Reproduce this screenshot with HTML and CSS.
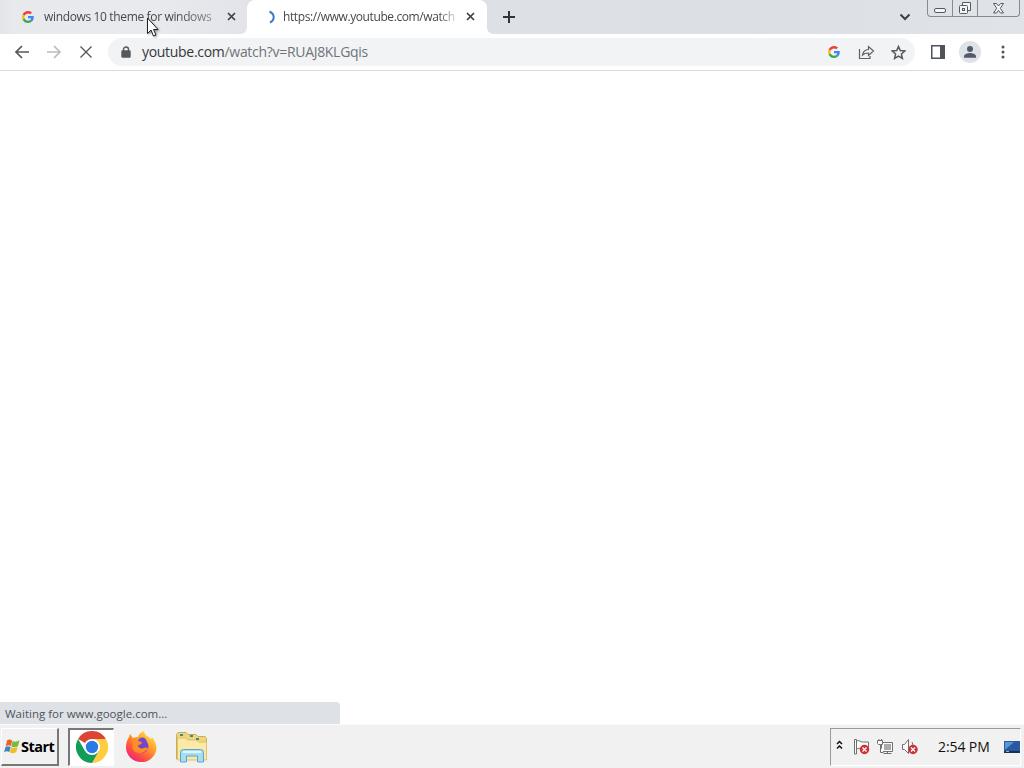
FILE: index.html
```
<!DOCTYPE html>
<html lang="en">

<head>
    <meta charset="utf-8">
    <meta name="viewport" content="width=device-width, initial-scale=1.0">
    <title>youtube.com</title>
    <link rel="stylesheet" href="styles.css">
</head>

<body>
    <!-- Shared logo -->
    <svg class="defs" width="0" height="0">
        <symbol id="google" viewBox="0 0 48 48">
            <path fill="#ea4335" d="M24 9.500c3.500 0 6.700 1.200 9.200 3.600l6.900-6.900C35.900 2.400 30.500 0 24 0 14.600 0 6.500 5.400 2.600 13.200l8 6.200C12.400 13.700 17.700 9.500 24 9.500z" />
            <path fill="#4285f4" d="M47 24.500c0-1.600-.2-3.100-.4-4.500H24v9h12.900c-.6 3-2.300 5.500-4.800 7.200l7.700 6C44.400 38 47 31.800 47 24.500z" />
            <path fill="#fbbc05" d="M10.500 28.600c-.5-1.500-.8-3-.8-4.600s.3-3.100.8-4.600l-8-6.200C.9 16.500 0 20.100 0 24s.9 7.500 2.600 10.800l7.900-6.200z" />
            <path fill="#34a853" d="M24 48c6.500 0 11.900-2.100 15.900-5.800l-7.700-6c-2.200 1.500-4.900 2.300-8.200 2.300-6.300 0-11.600-4.200-13.500-9.900l-8 6.200C6.500 42.600 14.600 48 24 48z" />
        </symbol>
    </svg>

    <div class="browser">
        <!-- Tabs -->
        <header class="tab-strip">
            <div class="tab">
                <svg class="favicon" width="12" height="12"><use href="#google" /></svg>
                <span class="tab-title first-title">windows 10 theme for windows</span>
                <svg class="close" width="9" height="9" viewBox="0 0 9 9"><path d="M1 1l7 7M8 1L1 8" /></svg>
            </div>
            <div class="tab active">
                <svg class="spinner" width="8" height="14" viewBox="0 0 8 14"><path d="M1.500 1.500C7 4 7 10 2 12.500" /></svg>
                <span class="tab-title">https://www.youtube.com/watch</span>
                <svg class="close" width="9" height="9" viewBox="0 0 9 9"><path d="M1 1l7 7M8 1L1 8" /></svg>
            </div>
            <svg class="new-tab" width="12" height="12" viewBox="0 0 12 12"><path d="M6 0v12M0 6h12" /></svg>
            <svg class="tab-search" width="12" height="8" viewBox="0 0 12 8"><path d="M1.500 1.500L6 6l4.500-4.500" /></svg>
            <div class="window-controls">
                <span class="control"><svg width="13" height="6" viewBox="0 0 13 6"><rect x=".5" y=".5" width="11" height="4" rx="1.500" /></svg></span>
                <span class="control restore"><svg width="14" height="14" viewBox="0 0 14 14"><path d="M4.500 4V1.500h8v8H10" /><rect x="1.500" y="4.500" width="8" height="8" rx="1" /><rect x="4.500" y="7.500" width="2" height="2" /></svg></span>
                <span class="control exit"><svg width="13" height="11" viewBox="0 0 13 11"><path d="M1.500.5h3l2 2.500 2-2.500h3L8.300 5.300l3.200 4.700h-3l-2-2.600-2 2.600h-3l3.200-4.700z" /></svg></span>
            </div>
        </header>

        <!-- Toolbar -->
        <nav class="toolbar">
            <svg class="back" width="16" height="14" viewBox="0 0 16 14"><path d="M15 7H2M8 1L2 7l6 6" /></svg>
            <svg class="forward" width="16" height="14" viewBox="0 0 16 14"><path d="M1 7h13M8 1l6 6-6 6" /></svg>
            <svg class="stop" width="12" height="12" viewBox="0 0 12 12"><path d="M.5.500l11 11M11.500.5l-11 11" /></svg>
            <div class="address">
                <svg class="lock" width="10" height="12" viewBox="0 0 10 12"><path d="M2.500 5V3.500a2.500 2.500 0 0 1 5 0V5" /><rect x="1" y="5" width="8" height="6" rx=".5" /></svg>
                <span class="url"><b>youtube.com</b>/watch?v=RUAJ8KLGqis</span>
                <svg width="12" height="12"><use href="#google" /></svg>
                <svg class="share" width="17" height="15" viewBox="0 0 17 15"><path d="M1.500 4v9.500H12V11M4.500 10C5 6.500 7 4.800 10.500 4.500V1.500L15.500 6l-5 4.500V8C7.500 8 6 8.500 4.500 10z" /></svg>
                <svg class="star" width="15" height="15" viewBox="0 0 15 15"><path d="M7.500 1.500l1.800 4.100 4.500.4-3.400 3 1 4.400-3.900-2.300-3.900 2.300 1-4.400-3.400-3 4.500-.4z" /></svg>
            </div>
            <svg class="side-panel" width="14" height="14" viewBox="0 0 14 14"><path d="M0 0h14v14H0zM1.500 1.500v11H9v-11z" fill-rule="evenodd" /></svg>
            <svg class="profile" width="22" height="22" viewBox="0 0 22 22"><circle cx="11" cy="11" r="11" fill="#dfe2e7" /><circle cx="11" cy="8" r="3" /><path d="M5 16.700v-1.500C5 13 9 12 11 12s6 1 6 3.200v1.500z" /></svg>
            <svg class="menu" width="4" height="14" viewBox="0 0 4 14"><circle cx="2" cy="2" r="1.500" /><circle cx="2" cy="7" r="1.500" /><circle cx="2" cy="12" r="1.500" /></svg>
        </nav>

        <main class="page">
            <div class="status">Waiting for www.google.com...</div>
        </main>
    </div>

    <!-- Taskbar -->
    <footer class="taskbar">
        <div class="start">
            <svg width="16" height="15" viewBox="0 0 16 15">
                <path fill="#e8632b" d="M3 1.500c2-1.500 3.500-1 5.200 0L7 7c-1.500-1-3.300-1-5.300.2z" />
                <path fill="#7eb83c" d="M8.700 2c2 1 3.800 1 6.800-.7L14 7c-2 1.500-4.800 1.600-6.600.5z" />
                <path fill="#3f83c5" d="M1.500 8c1.700-1.200 3.500-1 5.200 0l-1.400 5C3.600 12 2 12 0 13.200z" />
                <path fill="#f0bd2c" d="M7.200 8.300c2 1 4.300 1 6.500-.3l-1.500 5c-2 1.500-4.500 1.500-6.400.3z" />
            </svg>
            <span>Start</span>
        </div>
        <div class="task pressed">
            <svg width="32" height="32" viewBox="0 0 32 32">
                <path fill="#db4437" d="M16 16L2.140 8A16 16 0 0 1 29.860 8z" />
                <path fill="#ffcd40" d="M16 16V8h13.860A16 16 0 0 1 16 32l6.930-12z" />
                <path fill="#0f9d58" d="M2.140 8A16 16 0 0 0 16 32l6.930-12L16 16 9.070 20z" />
                <circle cx="16" cy="16" r="8" fill="#fff" />
                <circle cx="16" cy="16" r="6.200" fill="#287be6" />
            </svg>
        </div>
        <div class="task firefox">
            <svg width="32" height="32" viewBox="0 0 32 32">
                <defs>
                    <linearGradient id="flame" x1=".85" y1=".1" x2=".2" y2=".95">
                        <stop offset="0" stop-color="#ffe14a" />
                        <stop offset=".4" stop-color="#ff9629" />
                        <stop offset=".75" stop-color="#ff4b45" />
                        <stop offset="1" stop-color="#e9257f" />
                    </linearGradient>
                </defs>
                <path fill="url(#flame)" d="M4 6l1-3 3 4c2-1 4-1 5-1C14 3 16 1 19 0c0 4 4 5 7 8l1-2c3 4 4.500 7 4.500 11A15 15 0 0 1 16 31 15 15 0 0 1 1 17C1 12 2 9 4 6z" />
                <path fill="#7545c9" d="M14 8c4-3 7-1 8 3 2 3 2 6 0 8-2 4-8 4-11 1-2-2-2-4-1-6l5-1-2-3z" />
                <path fill="#ff8d25" d="M5 7c3 0 6 1 8 3l4 1c0 2-2 3-4 3 0 3 3 4 6 3 2-1 4 0 4 1-3 2-4 4-8 4-6 0-9-5-7-9z" />
            </svg>
        </div>
        <div class="task explorer">
            <svg width="34" height="32" viewBox="0 0 34 32">
                <path fill="#f0d67b" stroke="#c9ad5b" d="M1.500 27V3.500L3 1.500h8l2 2h8l2 2h7l1.500 2V28h-30z" />
                <path fill="#fbe9a5" stroke="#dcc273" d="M2.500 29V7h8l2 2h9l2 2h8v18z" />
                <path stroke="#4a8190" stroke-width="2" d="M5 4h3M15 5h3M21 8h3" />
                <path fill="#a8dcf0" stroke="#57a7ce" d="M5.500 31v-9.500q0-3 3-3h17q3 0 3 3V31h-6v-6h-11v6z" />
                <path fill="#dff5fd" d="M8 20h18v2H8z" />
            </svg>
        </div>
        <div class="tray">
            <svg class="chevrons" width="7" height="10" viewBox="0 0 7 10"><path d="M1 4l2.500-2.500L6 4M1 8.500L3.500 6 6 8.500" /></svg>
            <svg class="flag" width="17" height="16" viewBox="0 0 17 16">
                <path class="line" d="M1.500 15V.5h2V15zM3.500 2c3-1.500 4 1.500 7 1h5v7c-4 1-7-2-12 0" />
                <circle cx="11.500" cy="10.500" r="4.700" fill="#cf3038" /><path class="cross" d="M9.500 8.500l4 4M13.500 8.500l-4 4" />
            </svg>
            <svg class="network" width="17" height="16" viewBox="0 0 17 16">
                <path class="line" d="M4.500 3.500h11v9h-11zM6.500 14.500h8M10.500 13v2" />
                <path fill="#aaa" d="M7 5h7v6H7z" />
                <path class="line" d="M.5 1.500h5v4h-2v8h3M3.500 5.500h-2l-1-1v-3M2 0v2M4.500 0v2" />
            </svg>
            <svg class="sound" width="17" height="16" viewBox="0 0 17 16">
                <path class="line" d="M1.500 5.500h2l4-5v14l-4-4h-2zM11 3l1 3" />
                <circle cx="12" cy="10.500" r="4.700" fill="#cf3038" /><path class="cross" d="M10 8.500l4 4M14 8.500l-4 4" />
            </svg>
            <time class="clock">2:54 PM</time>
            <svg class="desktop" width="16" height="14" viewBox="0 0 16 14">
                <path fill="#2859a2" d="M0 1h16v11H0z" /><path fill="#5b94d3" d="M1 2h9L2 9H1z" /><path fill="#183052" d="M0 11h16v2H0z" /><path fill="#85b4db" d="M2 11h3v1H2z" />
            </svg>
        </div>
    </footer>

    <!-- Mouse pointer -->
    <svg class="cursor" width="14" height="21" viewBox="0 0 14 21"><path d="M1.500 1v15.500L5 13l2.500 6 2.500-1-2.500-5.500H12z" /></svg>
</body>

</html>
```
FILE: styles.css
```
* {
    box-sizing: border-box;
}

body {
    margin: 0;
    width: 1024px;
    height: 768px;
    overflow: hidden;
    display: flex;
    flex-direction: column;
    background: #fff;
    color: #45484d;
    font-family: "Open Sans", "Noto Sans", sans-serif;
    font-size: 12px;
}

svg {
    display: block;
    flex: none;
    fill: none;
}

.defs {
    position: absolute;
}

.browser {
    height: 724px;
    display: flex;
    flex-direction: column;
}

/* Tabs */
.tab-strip {
    height: 34px;
    display: flex;
    align-items: flex-start;
    background: linear-gradient(90deg, #e2e4e8, #dee1e6 25%, #dcdfe4 75%, #e0e3e7);
}

.tab {
    width: 247px;
    height: 34px;
    padding: 0 11px 1px 22px;
    display: flex;
    align-items: center;
    background: linear-gradient(90deg, #e2e4e8 0, #e8e9ed 12px, #e9eaee 60%, #e2e4e9);
}

.tab.active {
    position: relative;
    width: 240px;
    padding: 0 12px 1px 21px;
    background: #fff;
    border-radius: 8px 8px 0 0;
}

/* Curved feet of the active tab */
.tab.active::before,
.tab.active::after {
    content: "";
    position: absolute;
    bottom: 0;
    width: 6px;
    height: 6px;
}

.tab.active::before {
    right: 100%;
    background: radial-gradient(circle at 0 0, transparent 5.5px, #fff 6px);
}

.tab.active::after {
    left: 100%;
    background: radial-gradient(circle at 100% 0, transparent 5.5px, #fff 6px);
}

.tab-title {
    width: 173px;
    margin-left: 7px;
    white-space: nowrap;
    letter-spacing: -0.4px;
    -webkit-mask-image: linear-gradient(90deg, #000 90%, rgba(0, 0, 0, 0.2));
}

.first-title {
    width: 174px;
    margin-left: 10px;
    letter-spacing: -0.35px;
    -webkit-mask-image: linear-gradient(90deg, #000 75%, rgba(0, 0, 0, 0.45));
}

.close {
    margin-left: auto;
    stroke: #3c4043;
    stroke-width: 1.7;
}

.spinner {
    stroke: #3c78c8;
    stroke-width: 2;
}

.new-tab {
    margin: 11px 0 0 16px;
    stroke: #303338;
    stroke-width: 2;
}

.tab-search {
    margin: 13px 16px 0 auto;
    stroke: #3c4043;
    stroke-width: 2;
}

.window-controls {
    width: 93px;
    height: 17px;
    margin-right: 4px;
    display: flex;
    border: 1px solid #858b91;
    border-top: 0;
    border-radius: 0 0 4px 4px;
}

.control {
    width: 25px;
    display: flex;
    justify-content: center;
    align-items: center;
    border-right: 1px solid #858b91;
}

.control:first-child {
    padding-top: 5px;
}

.control svg {
    stroke: #555a60;
    fill: #f4f5f7;
}

.control.exit {
    width: 41px;
    border: 0;
}

/* Toolbar */
.toolbar {
    height: 37px;
    padding: 0 19px 0 14px;
    display: flex;
    align-items: center;
    border-bottom: 1px solid #d9dbde;
}

.back,
.forward,
.stop {
    stroke: #55585c;
    stroke-width: 1.7;
}

.forward {
    margin-left: 16px;
    stroke: #b9bbbe;
}

.stop {
    margin-left: 18px;
    stroke-width: 1.4;
}

.address {
    width: 807px;
    height: 28px;
    margin-left: 16px;
    padding: 0 9px 0 13px;
    display: flex;
    align-items: center;
    background: #f1f3f4;
    border-radius: 14px;
}

.lock {
    stroke: #55585c;
    stroke-width: 1.4;
}

.lock rect {
    fill: #55585c;
}

.url {
    margin: 0 auto 0 11px;
    padding-bottom: 1px;
    color: #707479;
    font-size: 14px;
    letter-spacing: -0.3px;
}

.url b {
    color: #36383c;
    font-weight: 400;
}

.share {
    margin: 0 16px 0 18px;
    stroke: #5b5e62;
    stroke-width: 1.2;
}

.star {
    stroke: #55585c;
    stroke-width: 1.5;
}

.side-panel {
    margin-left: 16px;
    fill: #505357;
}

.profile {
    margin: 0 20px 0 14px;
    fill: #525a68;
}

.menu {
    margin-left: auto;
    fill: #505357;
}

/* Page */
.page {
    flex: 1;
    display: flex;
    align-items: flex-end;
}

.status {
    width: 340px;
    height: 22px;
    padding-left: 5px;
    background: #dee1e6;
    border-radius: 0 4px 0 0;
    color: #505459;
    font-size: 11.5px;
    line-height: 23px;
}

/* Taskbar */
.taskbar {
    height: 44px;
    padding: 3px 3px 2px 1px;
    display: flex;
    background: #f1f1f1;
    border-top: 1px solid #fafafa;
}

.start {
    width: 58px;
    height: 38px;
    padding-left: 2px;
    display: flex;
    align-items: center;
    background: #f1f1f1;
    border: 1px solid #fff;
    border-right: 2px solid #777;
    border-bottom: 2px solid #777;
    color: #000;
    font-size: 14.5px;
    font-weight: 700;
    letter-spacing: -0.55px;
}

.start span {
    margin-left: 1px;
    padding-bottom: 1px;
}

.task {
    width: 46px;
    height: 38px;
    display: flex;
    justify-content: center;
    align-items: center;
}

.pressed {
    margin-left: 9px;
    padding-bottom: 1px;
    background: #fff;
    border: 2px solid #777;
    border-right: 1px solid #fff;
    border-bottom: 1px solid #fff;
}

.firefox {
    margin-left: 4px;
}

.explorer {
    margin-left: 5px;
}

.tray {
    width: 191px;
    height: 38px;
    margin-left: auto;
    padding: 0 0 1px 5px;
    display: flex;
    align-items: center;
    border: 1px solid #999;
    border-right-color: #fff;
    border-bottom-color: #fff;
}

.chevrons {
    margin: 0 10px 4px 0;
    stroke: #111;
    stroke-width: 1.5;
}

.line {
    fill: #fafafa;
    stroke: #707070;
}

.cross {
    stroke: #fff;
    stroke-width: 1.3;
}

.network,
.sound {
    margin-left: 7px;
}

.clock {
    margin-left: 20px;
    color: #111;
    font-size: 14px;
    letter-spacing: -0.1px;
    white-space: nowrap;
}

.desktop {
    margin: 0 0 0 auto;
}

/* Pointer above the tabs */
.cursor {
    position: absolute;
    left: 146px;
    top: 17px;
    fill: #fff;
    stroke: #222;
    filter: drop-shadow(1px 1px 1px rgba(0, 0, 0, 0.4));
}
```
